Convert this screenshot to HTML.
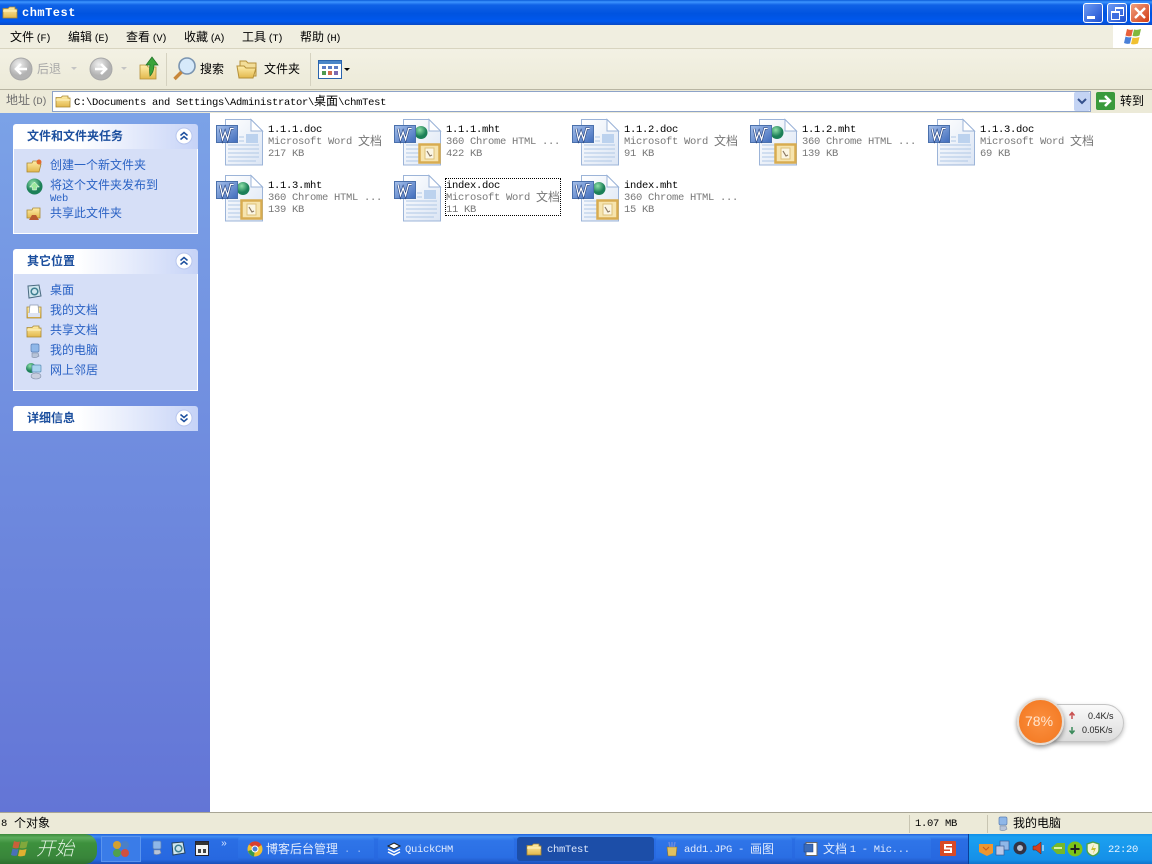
<!DOCTYPE html>
<html><head><meta charset="utf-8"><style>
html,body{margin:0;padding:0;width:1152px;height:864px;overflow:hidden;background:#fff}
body{position:relative;font-family:"Noto Sans CJK SC","WenQuanYi Zen Hei",sans-serif;font-size:12px;color:#000}
div,span.a,svg.a{position:absolute}
.t{white-space:nowrap;line-height:14px;height:14px}
i{font-style:normal;font-family:"Liberation Mono",monospace;font-size:10.5px;letter-spacing:-.3px;position:relative;top:-1px}
.m i{letter-spacing:-1.6px;top:0;margin-left:-1px}
.u{position:relative;top:-1px}
.hd{left:13px;width:185px;height:25px;border-radius:3px 3px 0 0;background:linear-gradient(90deg,#fff 0,#fff 35%,#c6d3f7 100%)}
.hd .t{left:14px;top:5px;font-weight:bold;font-size:12px;color:#1c4f9e}
.bd{left:13px;width:185px;background:#d6dff7;border:1px solid #fff;border-top:0;box-sizing:border-box}
.lk{color:#2a62c4;left:50px}
.tb{top:837px;height:24px;border-radius:3px;background:linear-gradient(#3f8cf3 0,#2f75e8 15%,#2a6ee4 85%,#245fd0 100%);color:#fff}
.tb .t{top:5px;color:#dfe9fc}
.f{color:#777}
</style></head><body>
<svg width="0" height="0" style="position:absolute"><defs>
<linearGradient id="pg" x1="0" y1="0" x2="1" y2="1"><stop offset="0" stop-color="#fff"/><stop offset="1" stop-color="#dbe5f4"/></linearGradient>
<linearGradient id="wb" x1="0" y1="0" x2="1" y2="1"><stop offset="0" stop-color="#a6c0ea"/><stop offset="1" stop-color="#3f6cbc"/></linearGradient>
<linearGradient id="fo" x1="0" y1="0" x2="0" y2="1"><stop offset="0" stop-color="#ffeeaa"/><stop offset="1" stop-color="#e2b84c"/></linearGradient>
<radialGradient id="gl" cx=".4" cy=".3"><stop offset="0" stop-color="#8fe0a8"/><stop offset="1" stop-color="#1c8058"/></radialGradient>
<radialGradient id="gy" cx=".4" cy=".3"><stop offset="0" stop-color="#f0f0f0"/><stop offset="1" stop-color="#b2b2b2"/></radialGradient>
<symbol id="doc" viewBox="0 0 48 48">
<path d="M9.5 1.5H35L46.500 13V47H9.500Z" fill="url(#pg)" stroke="#9cb4d8"/><path d="M35 1.500V13H46.500Z" fill="#fff" stroke="#9cb4d8"/>
<path d="M23 19h5M23 23h5M12 27h31M12 31h31M12 35h31M12 39h31M12 43h28" stroke="#b0c8e6" stroke-width="1.100"/>
<rect x="30" y="16" width="12" height="9" fill="#bcd2ee"/>
<rect x=".5" y="7.500" width="21" height="17" fill="url(#wb)" stroke="#4a70ac"/>
<path d="M4 10.500l2.500 11 2.600-7.500 2.500 7.500 3-11h3" fill="none" stroke="#23407e" stroke-width="2.400"/>
<path d="M4 10.500l2.500 11 2.600-7.500 2.500 7.500 3-11h3" fill="none" stroke="#fff" stroke-width="1.200"/>
</symbol>
<symbol id="mht" viewBox="0 0 48 48">
<path d="M9.5 1.5H35L46.500 13V47H9.500Z" fill="url(#pg)" stroke="#9cb4d8"/><path d="M35 1.500V13H46.500Z" fill="#fff" stroke="#9cb4d8"/>
<path d="M12 27h14M12 31h14M12 35h14M12 39h14M12 43h28" stroke="#b0c8e6" stroke-width="1.100"/>
<circle cx="27" cy="14.500" r="6.500" fill="url(#gl)"/>
<rect x=".5" y="7.500" width="21" height="17" fill="url(#wb)" stroke="#4a70ac"/>
<path d="M4 10.500l2.500 11 2.600-7.500 2.500 7.500 3-11h3" fill="none" stroke="#23407e" stroke-width="2.400"/>
<path d="M4 10.500l2.500 11 2.600-7.500 2.500 7.500 3-11h3" fill="none" stroke="#fff" stroke-width="1.200"/>
<rect x="25.500" y="26.500" width="20" height="18" fill="#f6e4ae" stroke="#d8ac50" stroke-width="2.500"/>
<rect x="31" y="30" width="9" height="11" fill="#fbf6e4" stroke="#dcc07a"/><path d="M33 33l3 5 2-1" stroke="#8c7a65" stroke-width="1.200" fill="none"/>
</symbol>
<symbol id="fold" viewBox="0 0 16 16"><path d="M1 4.500h5l1.500-1.500H13v2h2v9H1z" fill="url(#fo)" stroke="#a98730" stroke-width=".8"/><path d="M1 7h14" stroke="#fff6c8"/></symbol>
<symbol id="chev" viewBox="0 0 18 18"><circle cx="9" cy="9" r="8" fill="#fff" stroke="#b8c6ee"/><path d="M5.500 8.500L9 5.500l3.500 3M5.500 12.500L9 9.500l3.500 3" fill="none" stroke="#1c4f9e" stroke-width="1.500"/></symbol>
<symbol id="chevd" viewBox="0 0 18 18"><circle cx="9" cy="9" r="8" fill="#fff" stroke="#b8c6ee"/><path d="M5.500 5.500L9 8.500l3.500-3M5.500 9.500L9 12.500l3.500-3" fill="none" stroke="#1c4f9e" stroke-width="1.500"/></symbol>
<symbol id="pc" viewBox="0 0 16 16"><rect x="5" y="1" width="8" height="8" rx="1.500" fill="#8fb7e8" stroke="#5a7fb5" stroke-width=".7"/><path d="M6 10h6l1 3q-3 2.500-7 1z" fill="#b8c4d8" stroke="#7d8ba5" stroke-width=".6"/></symbol>
<symbol id="net" viewBox="0 0 18 18"><circle cx="6" cy="6" r="5" fill="url(#gl)"/><rect x="7" y="3" width="9" height="7" rx="1" fill="#a9d3ef" stroke="#5a8db5" stroke-width=".7"/><ellipse cx="11" cy="14" rx="5" ry="3" fill="#c8cede" stroke="#7d8ba5" stroke-width=".6"/></symbol>
</defs></svg>

<!-- title bar -->
<div style="left:0;top:0;width:1152px;height:25px;background:linear-gradient(#0a5bd8 0,#3d95ff 8%,#0f62e6 20%,#0053e0 55%,#0058ee 85%,#0a49c4 100%)"></div>
<svg class="a" style="left:2px;top:4px" width="16" height="16"><use href="#fold"/></svg>
<div class="t" style="left:22px;top:6px;color:#fff;font-family:'Liberation Mono',monospace;font-weight:bold;font-size:12px;letter-spacing:.5px">chmTest</div>
<div style="left:1083px;top:3px;width:18px;height:18px;border:1px solid #fff;border-radius:3px;background:linear-gradient(135deg,#6d9bf4,#1d4fd0)"><div style="left:3px;top:12px;width:8px;height:3px;background:#fff"></div></div>
<div style="left:1107px;top:3px;width:18px;height:18px;border:1px solid #fff;border-radius:3px;background:linear-gradient(135deg,#6d9bf4,#1d4fd0)"><div style="left:7px;top:3px;width:7px;height:6px;border:1px solid #fff;border-top-width:2px"></div><div style="left:3px;top:7px;width:7px;height:6px;border:1px solid #fff;border-top-width:2px;background:#3f6fe0"></div></div>
<div style="left:1130px;top:3px;width:18px;height:18px;border:1px solid #fff;border-radius:3px;background:linear-gradient(135deg,#f0a080,#d23c14)"><svg class="a" style="left:2px;top:2px" width="14" height="14"><path d="M2 2l10 10M12 2L2 12" stroke="#fff" stroke-width="2.400"/></svg></div>

<!-- menu bar -->
<div style="left:0;top:25px;width:1152px;height:24px;background:#f0eee0;border-bottom:1px solid #d8d4c0;box-sizing:border-box"></div>
<div class="t m" style="left:10px;top:30px">文件 <i>(F)</i></div>
<div class="t m" style="left:68px;top:30px">编辑 <i>(E)</i></div>
<div class="t m" style="left:126px;top:30px">查看 <i>(V)</i></div>
<div class="t m" style="left:184px;top:30px">收藏 <i>(A)</i></div>
<div class="t m" style="left:242px;top:30px">工具 <i>(T)</i></div>
<div class="t m" style="left:300px;top:30px">帮助 <i>(H)</i></div>
<div style="left:1113px;top:25px;width:39px;height:23px;background:#fff"></div>
<svg class="a" style="left:1123px;top:27px" width="20" height="19"><path d="M4 2q3 1.500 6 .5L8.500 9q-3 1-6-.5z" fill="#e8603a"/><path d="M11 2.500q3 1 7-.5l-1.500 6.500q-3 1.500-7 .5z" fill="#80b83c"/><path d="M2.500 9.500q3 1.500 6 .5L7 16.500q-3 1-6-.5z" fill="#4a80d8"/><path d="M9.500 10.500q3 1 7-.5L15 16.500q-4 1.500-7 .5z" fill="#f0c030"/></svg>

<!-- toolbar -->
<div style="left:0;top:49px;width:1152px;height:41px;background:linear-gradient(#f3f1e4,#ecead8);border-bottom:1px solid #b8b5a2;box-sizing:border-box"></div>
<svg class="a" style="left:9px;top:57px" width="24" height="24"><circle cx="12" cy="12" r="11" fill="url(#gy)" stroke="#a8a8a8"/><path d="M18 12H8M12 7l-5 5 5 5" fill="none" stroke="#fff" stroke-width="2.600"/></svg>
<div class="t" style="left:37px;top:62px;color:#a8a8a8">后退</div>
<div style="left:71px;top:67px;border:3px solid transparent;border-top:3px solid #c4c4c4"></div>
<svg class="a" style="left:89px;top:57px" width="24" height="24"><circle cx="12" cy="12" r="11" fill="url(#gy)" stroke="#a8a8a8"/><path d="M6 12h10M12 7l5 5-5 5" fill="none" stroke="#fff" stroke-width="2.600"/></svg>
<div style="left:121px;top:67px;border:3px solid transparent;border-top:3px solid #c4c4c4"></div>
<svg class="a" style="left:138px;top:56px" width="22" height="24"><path d="M2 9h7l1 2h8v12H2z" fill="url(#fo)" stroke="#b59038" stroke-width=".8"/><path d="M12 20q-1-7 0-11H8l6-8 6 8h-4q0 7-4 11z" fill="#3aa33a" stroke="#1d6f25" stroke-width=".7"/></svg>
<div style="left:166px;top:53px;width:1px;height:33px;background:#d5d2c0"></div>
<svg class="a" style="left:172px;top:56px" width="26" height="26"><circle cx="15" cy="10" r="8" fill="#d6e9fa" stroke="#7a94b0" stroke-width="1.600"/><path d="M9.500 16L2.500 23" stroke="#c8873a" stroke-width="3.400"/></svg>
<div class="t" style="left:200px;top:62px">搜索</div>
<svg class="a" style="left:236px;top:58px" width="24" height="22"><path d="M4 3h6l2 2h8v13H4z" fill="#f2dd98" stroke="#b59038"/><path d="M1 8h7l2 2h10l-3 10H3z" fill="url(#fo)" stroke="#b59038"/></svg>
<div class="t" style="left:264px;top:62px">文件夹</div>
<div style="left:310px;top:53px;width:1px;height:33px;background:#d5d2c0"></div>
<svg class="a" style="left:318px;top:60px" width="24" height="19"><rect x=".5" y=".5" width="23" height="18" fill="#fff" stroke="#2a64ad"/><rect x="1" y="1" width="22" height="3" fill="#4a86c8"/><path d="M4 6h4v3H4zM10 6h4v3h-4zM16 6h4v3h-4z" fill="#5b7cc4"/><path d="M4 11h4v4H4z" fill="#4e9a50"/><path d="M10 11h4v4h-4z" fill="#d06a50"/><path d="M16 11h4v4h-4z" fill="#7c6ab0"/></svg>
<div style="left:344px;top:68px;border:3px solid transparent;border-top:3px solid #000"></div>

<!-- address bar -->
<div style="left:0;top:90px;width:1152px;height:23px;background:#ecead8"></div>
<div class="t m" style="left:6px;top:93px;color:#6f6f6f">地址 <i>(D)</i></div>
<div style="left:52px;top:91px;width:1039px;height:21px;border:1px solid #8ea3c8;box-sizing:border-box;background:#fff"></div>
<svg class="a" style="left:55px;top:93px" width="16" height="16"><use href="#fold"/></svg>
<div class="t" style="left:74px;top:95px"><i>C:\Documents and Settings\Administrator\</i><span class="u">桌面</span><i>\chmTest</i></div>
<div style="left:1074px;top:92px;width:16px;height:19px;background:#c4d4f4;border-radius:2px"><svg class="a" style="left:3px;top:6px" width="10" height="8"><path d="M1 1l4 4 4-4" fill="none" stroke="#34508c" stroke-width="2"/></svg></div>
<svg class="a" style="left:1096px;top:92px" width="19" height="18"><rect width="19" height="18" rx="2" fill="#3a9a3c"/><path d="M3 9h11M9 4l5 5-5 5" fill="none" stroke="#fff" stroke-width="2.600"/></svg>
<div class="t" style="left:1120px;top:94px">转到</div>

<!-- sidebar -->
<div style="left:0;top:113px;width:210px;height:699px;background:linear-gradient(#7ba2e7,#6375d6)"></div>
<div class="hd" style="top:124px"><div class="t">文件和文件夹任务</div><svg class="a" style="left:162px;top:3px" width="18" height="18"><use href="#chev"/></svg></div>
<div class="bd" style="top:149px;height:85px"></div>
<svg class="a" style="left:26px;top:158px" width="16" height="16"><path d="M1 5h5l1-2h6v3h2l-2 8H1z" fill="url(#fo)" stroke="#a98730" stroke-width=".8"/><circle cx="13" cy="4" r="2.500" fill="#e26a2e"/></svg>
<div class="t lk" style="top:158px">创建一个新文件夹</div>
<svg class="a" style="left:26px;top:178px" width="17" height="17"><circle cx="8.500" cy="8.500" r="8" fill="url(#gl)"/><path d="M8.500 4l5 5h-3v3h-4V9h-3z" fill="#9be89b" stroke="#fff" stroke-width=".5"/></svg>
<div class="t lk" style="top:178px">将这个文件夹发布到</div>
<div class="t lk" style="top:191px"><i>Web</i></div>
<svg class="a" style="left:26px;top:206px" width="16" height="16"><path d="M1 4h5l1-2h7v10H1z" fill="url(#fo)" stroke="#a98730" stroke-width=".8"/><path d="M3 14l3-5h4l3 5z" fill="#b85a30"/></svg>
<div class="t lk" style="top:206px">共享此文件夹</div>

<div class="hd" style="top:249px"><div class="t">其它位置</div><svg class="a" style="left:162px;top:3px" width="18" height="18"><use href="#chev"/></svg></div>
<div class="bd" style="top:274px;height:117px"></div>
<svg class="a" style="left:26px;top:283px" width="16" height="16"><path d="M2 3l11-1 2 11-12 2z" fill="#cfe6ee" stroke="#4a6a80"/><circle cx="8.500" cy="8.500" r="3.300" fill="none" stroke="#3f7f90" stroke-width="1.500"/></svg>
<div class="t lk" style="top:283px">桌面</div>
<svg class="a" style="left:26px;top:303px" width="16" height="16"><path d="M1 4h14v11H1z" fill="url(#fo)" stroke="#a98730" stroke-width=".8"/><path d="M4 2h8l1 10H3z" fill="#fff" stroke="#8a98b0" stroke-width=".7"/><rect x="2" y="10" width="12" height="4" fill="#dde3f2"/></svg>
<div class="t lk" style="top:303px">我的文档</div>
<svg class="a" style="left:26px;top:323px" width="16" height="16"><use href="#fold"/></svg>
<div class="t lk" style="top:323px">共享文档</div>
<svg class="a" style="left:26px;top:343px" width="16" height="16"><use href="#pc"/></svg>
<div class="t lk" style="top:343px">我的电脑</div>
<svg class="a" style="left:25px;top:362px" width="18" height="18"><use href="#net"/></svg>
<div class="t lk" style="top:363px">网上邻居</div>

<div class="hd" style="top:406px"><div class="t">详细信息</div><svg class="a" style="left:162px;top:3px" width="18" height="18"><use href="#chevd"/></svg></div>

<!-- files -->
<svg class="a" style="left:216px;top:118px" width="48" height="48"><use href="#doc"/></svg>
<div class="t" style="left:268px;top:122px"><i>1.1.1.doc</i></div><div class="t f" style="left:268px;top:134px"><i>Microsoft Word </i>文档</div><div class="t f" style="left:268px;top:146px"><i>217 KB</i></div>
<svg class="a" style="left:394px;top:118px" width="48" height="48"><use href="#mht"/></svg>
<div class="t" style="left:446px;top:122px"><i>1.1.1.mht</i></div><div class="t f" style="left:446px;top:134px"><i>360 Chrome HTML ...</i></div><div class="t f" style="left:446px;top:146px"><i>422 KB</i></div>
<svg class="a" style="left:572px;top:118px" width="48" height="48"><use href="#doc"/></svg>
<div class="t" style="left:624px;top:122px"><i>1.1.2.doc</i></div><div class="t f" style="left:624px;top:134px"><i>Microsoft Word </i>文档</div><div class="t f" style="left:624px;top:146px"><i>91 KB</i></div>
<svg class="a" style="left:750px;top:118px" width="48" height="48"><use href="#mht"/></svg>
<div class="t" style="left:802px;top:122px"><i>1.1.2.mht</i></div><div class="t f" style="left:802px;top:134px"><i>360 Chrome HTML ...</i></div><div class="t f" style="left:802px;top:146px"><i>139 KB</i></div>
<svg class="a" style="left:928px;top:118px" width="48" height="48"><use href="#doc"/></svg>
<div class="t" style="left:980px;top:122px"><i>1.1.3.doc</i></div><div class="t f" style="left:980px;top:134px"><i>Microsoft Word </i>文档</div><div class="t f" style="left:980px;top:146px"><i>69 KB</i></div>
<svg class="a" style="left:216px;top:174px" width="48" height="48"><use href="#mht"/></svg>
<div class="t" style="left:268px;top:178px"><i>1.1.3.mht</i></div><div class="t f" style="left:268px;top:190px"><i>360 Chrome HTML ...</i></div><div class="t f" style="left:268px;top:202px"><i>139 KB</i></div>
<svg class="a" style="left:394px;top:174px" width="48" height="48"><use href="#doc"/></svg>
<div style="left:445px;top:178px;width:116px;height:38px;border:1px dotted #000;box-sizing:border-box"></div>
<div class="t" style="left:446px;top:178px"><i>index.doc</i></div><div class="t f" style="left:446px;top:190px"><i>Microsoft Word </i>文档</div><div class="t f" style="left:446px;top:202px"><i>11 KB</i></div>
<svg class="a" style="left:572px;top:174px" width="48" height="48"><use href="#mht"/></svg>
<div class="t" style="left:624px;top:178px"><i>index.mht</i></div><div class="t f" style="left:624px;top:190px"><i>360 Chrome HTML ...</i></div><div class="t f" style="left:624px;top:202px"><i>15 KB</i></div>

<!-- speed widget -->
<div style="left:1040px;top:704px;width:84px;height:38px;border-radius:19px;background:linear-gradient(#fafafa,#dcdcdc);border:1px solid #c4c4c4;box-sizing:border-box;box-shadow:0 2px 4px rgba(0,0,0,.25)"></div>
<div style="left:1017px;top:698px;width:47px;height:47px;border-radius:50%;background:radial-gradient(circle at 50% 50%,#fb9040 0,#f47c26 75%,#d9651b 100%);border:2px solid #e4dcd4;box-sizing:border-box;box-shadow:0 2px 5px rgba(0,0,0,.45)"></div>
<div class="t" style="left:1025px;top:714px;color:#ffe6d0;font-family:'Liberation Sans',sans-serif;font-size:14px">78%</div>
<svg class="a" style="left:1068px;top:711px" width="8" height="24"><path d="M4 8V2M1.500 4.500L4 1.500l2.500 3" fill="none" stroke="#c85050" stroke-width="1.500"/><path d="M4 16v6M1.500 19.500L4 22.500l2.500-3" fill="none" stroke="#3a8a5a" stroke-width="1.500"/></svg>
<div class="t" style="left:1088px;top:709px;font-family:'Liberation Sans',sans-serif;font-size:9px;color:#222">0.4K/s</div>
<div class="t" style="left:1082px;top:723px;font-family:'Liberation Sans',sans-serif;font-size:9px;color:#222">0.05K/s</div>

<!-- status bar -->
<div style="left:0;top:812px;width:1152px;height:22px;background:#ecead8;border-top:1px solid #a8a595;box-sizing:border-box"></div>
<div class="t" style="left:1px;top:816px"><i>8</i></div><div class="t" style="left:14px;top:816px">个对象</div>
<div style="left:909px;top:815px;width:1px;height:18px;background:#c8c5b2"></div>
<div style="left:987px;top:815px;width:1px;height:18px;background:#c8c5b2"></div>
<div class="t" style="left:915px;top:816px"><i>1.07 MB</i></div>
<svg class="a" style="left:994px;top:816px" width="16" height="16"><use href="#pc"/></svg>
<div class="t" style="left:1013px;top:816px">我的电脑</div>

<!-- taskbar -->
<div style="left:0;top:834px;width:1152px;height:30px;background:linear-gradient(#1f5fd8 0,#3f8df3 8%,#2a6ee4 18%,#2768e0 85%,#1a4fb8 100%)"></div>
<div style="left:0;top:834px;width:97px;height:30px;border-radius:0 12px 12px 0;background:linear-gradient(#3c8a3c 0,#5cac5c 12%,#3d913d 30%,#38853a 80%,#2c6f2e 100%)"></div>
<svg class="a" style="left:10px;top:839px" width="20" height="19"><path d="M4 2q3 1.500 6 .5L8.500 9q-3 1-6-.5z" fill="#c8603a"/><path d="M11 2.500q3 1 7-.5l-1.500 6.500q-3 1.500-7 .5z" fill="#80a83c"/><path d="M2.500 9.500q3 1.500 6 .5L7 16.500q-3 1-6-.5z" fill="#4a70b8"/><path d="M9.500 10.500q3 1 7-.5L15 16.500q-4 1.500-7 .5z" fill="#e0b030"/></svg>
<div class="t" style="left:36px;top:836px;height:24px;line-height:24px;color:#dff0df;font-size:19px;font-style:italic;font-weight:300">开始</div>
<div style="left:101px;top:836px;width:40px;height:26px;background:#3a7ce8;border:1px solid #5a94ee;box-sizing:border-box"></div>
<svg class="a" style="left:112px;top:840px" width="18" height="18"><circle cx="5" cy="5" r="4" fill="#d4a030"/><circle cx="13" cy="5" r="4" fill="#4a80c8"/><circle cx="5" cy="13" r="4" fill="#50a050"/><circle cx="13" cy="13" r="4" fill="#d05040"/></svg>
<svg class="a" style="left:148px;top:840px" width="16" height="16"><use href="#pc"/></svg>
<svg class="a" style="left:170px;top:840px" width="16" height="16"><path d="M2 3l11-1 2 11-12 2z" fill="#cfe6ee" stroke="#26425c"/><circle cx="8.500" cy="8.500" r="3.300" fill="none" stroke="#3f7f90" stroke-width="1.500"/></svg>
<svg class="a" style="left:195px;top:841px" width="14" height="15"><rect x=".5" y=".5" width="13" height="14" fill="#f4f4f4" stroke="#223"/><rect x="1" y="1" width="12" height="3" fill="#333"/><path d="M3 8h3v4H3zM8 8h3v4H8z" fill="#444"/></svg>
<div class="t" style="left:221px;top:838px;color:#cfe0ff;font-family:'Liberation Mono',monospace;font-size:10px">»</div>

<div class="tb" style="left:238px;width:136px"><svg class="a" style="left:9px;top:4px" width="16" height="16"><circle cx="8" cy="8" r="7.500" fill="#f0c030"/><path d="M8 8L2 3.500A7.500 7.500 0 0 1 14.500 4z" fill="#d84030"/><path d="M8 8L1 10A7.500 7.500 0 0 0 7 15.500z" fill="#3a9a4a"/><circle cx="8" cy="8" r="3" fill="#4a80d8" stroke="#fff"/></svg><div class="t" style="left:28px">博客后台管理<i style="color:#9fbcf0">&nbsp;. .</i></div></div>
<div class="tb" style="left:378px;width:136px"><svg class="a" style="left:8px;top:4px" width="16" height="16"><path d="M8 2l6 3-6 3-6-3z" fill="#fff" stroke="#222"/><path d="M2 8l6 3 6-3M2 11l6 3 6-3" fill="none" stroke="#fff" stroke-width="1.500"/></svg><div class="t" style="left:27px"><i>QuickCHM</i></div></div>
<div class="tb" style="left:517px;width:137px;background:#1c4ea8"><svg class="a" style="left:9px;top:4px" width="16" height="16"><use href="#fold"/></svg><div class="t" style="left:30px"><i>chmTest</i></div></div>
<div class="tb" style="left:656px;width:136px"><svg class="a" style="left:9px;top:4px" width="14" height="16"><path d="M2 6h10l-1 9H3z" fill="#e0c060" stroke="#8a7030" stroke-width=".6"/><path d="M4 1l1 5M7 1v5M10 1L9 6" stroke="#6a8ae0" stroke-width="1.500"/></svg><div class="t" style="left:28px"><i>add1.JPG - </i>画图</div></div>
<div class="tb" style="left:795px;width:136px"><svg class="a" style="left:8px;top:4px" width="16" height="16"><rect x="3" y="1.500" width="11" height="13" fill="#fff" stroke="#666"/><rect x="1" y="3" width="9" height="8" fill="#3a6ab8" stroke="#1d3f80" stroke-width=".5"/></svg><div class="t" style="left:28px">文档 <i>1 - Mic...</i></div></div>
<svg class="a" style="left:940px;top:841px" width="16" height="15"><rect width="16" height="15" rx="1" fill="#d84a28"/><path d="M12 4H5v3.500h6V11H4" fill="none" stroke="#fff" stroke-width="2"/></svg>

<!-- tray -->
<div style="left:968px;top:834px;width:184px;height:30px;background:linear-gradient(#0f8ee8 0,#1ba0f0 10%,#1590e8 85%,#0f74cc 100%);border-left:1px solid #0a3f98;box-sizing:border-box"></div>
<svg class="a" style="left:978px;top:842px" width="16" height="14"><path d="M1 2h14v9l-6 3-8-4z" fill="#ee9630"/><path d="M5 5l3 3 3-3" stroke="#c85a20" fill="none"/></svg>
<svg class="a" style="left:995px;top:840px" width="16" height="16"><rect x="5" y="1" width="9" height="9" fill="#8fb7e8" stroke="#3a5a95" stroke-width=".7"/><rect x="1" y="6" width="8" height="9" fill="#b8c8e8" stroke="#3a5a95" stroke-width=".7"/></svg>
<svg class="a" style="left:1013px;top:841px" width="14" height="14"><circle cx="7" cy="7" r="6.500" fill="#334"/><circle cx="7" cy="7" r="3" fill="#b8c0d0"/></svg>
<svg class="a" style="left:1032px;top:841px" width="14" height="14"><path d="M1 5h3l5-4v12L4 9H1z" fill="#d84020" stroke="#602010" stroke-width=".5"/><path d="M11 4v6" stroke="#fff"/></svg>
<svg class="a" style="left:1050px;top:842px" width="16" height="13"><path d="M1 6l6-5h8v11H7z" fill="#76b82a"/><path d="M4 6h8" stroke="#d8f0a0" stroke-width="2"/></svg>
<svg class="a" style="left:1067px;top:841px" width="16" height="16"><circle cx="8" cy="8" r="7.500" fill="#7cc418"/><path d="M8 3.500v9M3.500 8h9" stroke="#222" stroke-width="2"/></svg>
<svg class="a" style="left:1085px;top:841px" width="16" height="16"><path d="M8 1l6 2v6q0 4-6 6-6-2-6-6V3z" fill="#f4f4d8" stroke="#4aa04a" stroke-width="1.400"/><path d="M9 3L6 9h3l-1 4 3-6H8z" fill="#c8c030"/></svg>
<div class="t" style="left:1108px;top:842px;color:#e8f4ff"><i>22:20</i></div>
</body></html>
